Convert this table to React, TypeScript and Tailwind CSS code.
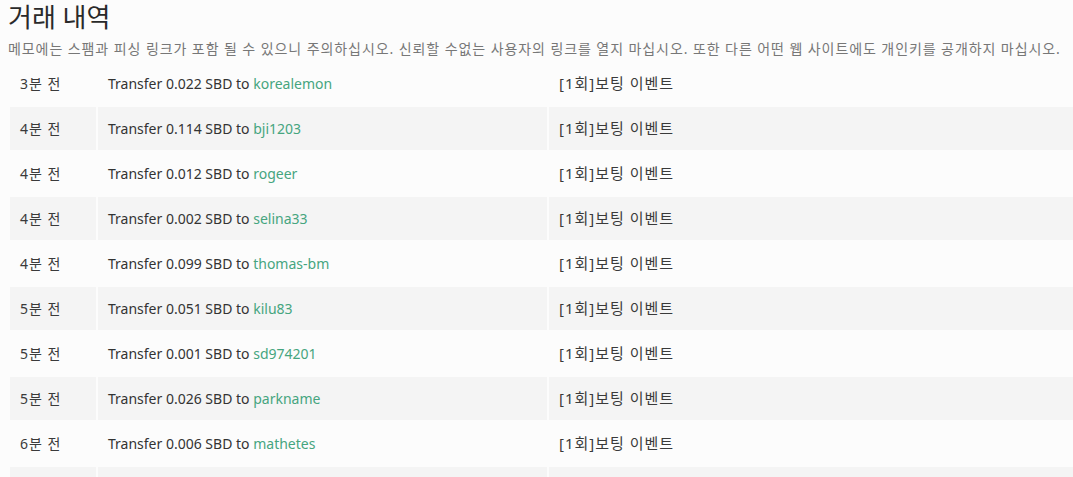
import React from "react";

const rows = [
  ["3분 전", "0.022", "korealemon"],
  ["4분 전", "0.114", "bji1203"],
  ["4분 전", "0.012", "rogeer"],
  ["4분 전", "0.002", "selina33"],
  ["4분 전", "0.099", "thomas-bm"],
  ["5분 전", "0.051", "kilu83"],
  ["5분 전", "0.001", "sd974201"],
  ["5분 전", "0.026", "parkname"],
  ["6분 전", "0.006", "mathetes"],
];

export default function App() {
  return (
    <div
      className="h-[477px] w-[1073px] overflow-hidden bg-[#fcfcfc] text-[#333]"
      style={{ fontFamily: '"Source Sans Pro", "Noto Sans", "Noto Sans CJK KR", sans-serif' }}
    >
      <h1 className="pl-2 pt-[1px] text-[26px] leading-[32px] font-normal text-[#2a2a2a]">거래 내역</h1>
      <p className="pl-2 pt-[6px] text-[14px] leading-[20px] tracking-[0.92px] text-[#777] whitespace-nowrap">
        메모에는 스팸과 피싱 링크가 포함 될 수 있으니 주의하십시오. 신뢰할 수없는 사용자의 링크를 열지 마십시오. 또한 다른 어떤 웹 사이트에도 개인키를 공개하지 마십시오.
      </p>
      <table className="ml-2 mt-[1px] w-[1080px] border-separate border-spacing-[2px] text-[14px]">
        <tbody>
          {rows.map((r, i) => {
            const bg = i % 2 === 1 ? "bg-[#f4f4f4]" : "";
            return (
              <tr key={i}>
                <td className={`h-[43px] w-[86px] pl-[10px] tracking-[1px] text-[#3a3a3a] ${bg}`}>{r[0]}</td>
                <td className={`h-[43px] w-[449px] pl-[10px] ${bg}`}>
                  Transfer {r[1]} SBD to <span className="text-[#46a57f]">{r[2]}</span>
                </td>
                <td className={`h-[43px] pl-[10px] text-[15px] tracking-[1px] text-[#3a3a3a] ${bg}`}>[1회]보팅 이벤트</td>
              </tr>
            );
          })}
          <tr>
            <td className="h-[43px] w-[86px] bg-[#f4f4f4]"></td>
            <td className="h-[43px] w-[449px] bg-[#f4f4f4]"></td>
            <td className="h-[43px] bg-[#f4f4f4]"></td>
          </tr>
        </tbody>
      </table>
    </div>
  );
}
